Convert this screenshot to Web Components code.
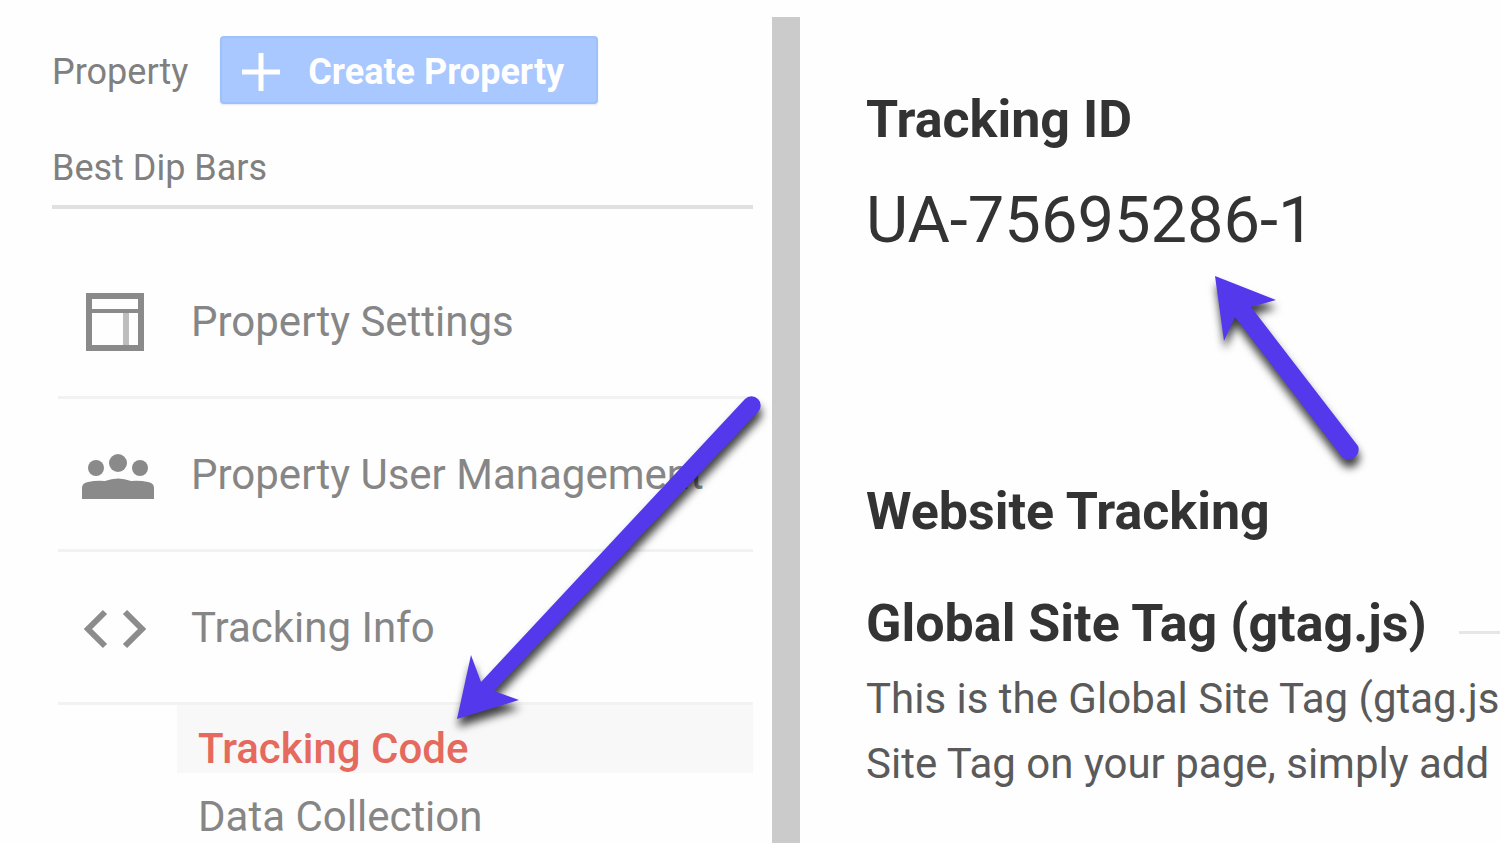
<!DOCTYPE html>
<html lang="en">
<head>
<meta charset="utf-8">
<title>Tracking Code</title>
<style>
    body {
        margin: 0;
        background: #fefefe;
        font-family: Roboto, "Liberation Sans", sans-serif;
    }
</style>
</head>
<body>
<admin-page>
    <property-column slot="nav">
        <create-button slot="action">Create Property</create-button>
        <span slot="name">Best Dip Bars</span>
        <nav-item icon="layout">Property Settings</nav-item>
        <nav-item icon="people">Property User Management</nav-item>
        <nav-item icon="code">Tracking Info</nav-item>
        <sub-item active>Tracking Code</sub-item>
        <sub-item>Data Collection</sub-item>
    </property-column>
    <tracking-details slot="main">
        <span slot="id">UA-75695286-1</span>
    </tracking-details>
</admin-page>

<template id="admin-page">
    <style>
        :host {
            display: grid;
            grid-template-columns: minmax(0, 772fr) 28px minmax(0, 700fr);
            height: 100vh;
            overflow: hidden;
        }
        .divider {
            margin-top: 17px;
            background: #cbcbcb;
        }
    </style>
    <slot name="nav"></slot>
    <div class="divider"></div>
    <slot name="main"></slot>
</template>

<template id="property-column">
    <style>
        :host {
            display: block;
            position: relative;
            padding: 36px 19px 0 52px;
            color: #808080;
        }
        header {
            display: flex;
            align-items: center;
            gap: 32px;
            font-size: 36px;
            line-height: 44px;
        }
        header span {
            padding-top: 4px;
        }
        .picker {
            display: block;
            width: 100%;
            margin: 42px 0 0;
            padding: 0 0 15px;
            border: 0;
            border-bottom: 4px solid #e0e0e0;
            background: none;
            color: inherit;
            font: 36px/44px Roboto, "Liberation Sans", sans-serif;
            text-align: left;
        }
        nav {
            margin: 37px 0 0 6px;
        }
        callout-arrow {
            position: absolute;
            top: 380px;
            right: 0;
        }
    </style>
    <header>
        <span>Property</span>
        <slot name="action"></slot>
    </header>
    <button class="picker" type="button"><slot name="name"></slot></button>
    <nav><slot></slot></nav>
    <callout-arrow kind="long"></callout-arrow>
</template>

<template id="create-button">
    <style>
        :host {
            display: block;
        }
        button {
            display: flex;
            align-items: center;
            gap: 28px;
            height: 68px;
            padding: 4px 32px 0 20px;
            border: 2px solid #9dc1fa;
            border-radius: 4px;
            background: #a8c8ff;
            box-shadow: 0 1px 2px #dfe6f5;
            color: #fff;
            font: bold 36px/44px Roboto, "Liberation Sans", sans-serif;
            white-space: nowrap;
        }
    </style>
    <button type="button">
        <svg width="38" height="40" viewBox="0 0 38 40" aria-hidden="true">
            <path d="M19 1v38M0 20h38" stroke="#fff" stroke-width="5"/>
        </svg>
        <slot></slot>
    </button>
</template>

<template id="nav-item">
    <style>
        :host {
            display: block;
            border-bottom: 3px solid #f2f2f2;
        }
        a {
            display: flex;
            align-items: center;
            gap: 31px;
            height: 150px;
            padding-left: 22px;
            color: #868686;
            font-size: 42px;
            text-decoration: none;
            white-space: nowrap;
        }
        svg {
            flex: none;
        }
    </style>
    <a href="#"><svg width="80" height="64" viewBox="0 0 80 64" aria-hidden="true"></svg><slot></slot></a>
</template>

<template id="sub-item">
    <style>
        :host {
            display: block;
            margin-left: 119px;
        }
        :host([active]) {
            background: #f8f8f8;
        }
        a {
            display: block;
            padding: 20px 0 0 21px;
            color: #868686;
            font-size: 42px;
            line-height: 48px;
            text-decoration: none;
        }
        :host([active]) a {
            color: #e5695c;
            font-weight: 500;
        }
    </style>
    <a href="#"><slot></slot></a>
</template>

<template id="tracking-details">
    <style>
        :host {
            display: block;
            position: relative;
            padding: 88px 0 0 66px;
            color: #333;
            white-space: nowrap;
        }
        h2, h3, p {
            margin: 0;
        }
        h2, h3 {
            font-size: 52px;
            line-height: 64px;
            font-weight: bold;
        }
        .id {
            margin-top: 28px;
            font-size: 65px;
            line-height: 80px;
        }
        .website {
            margin-top: 220px;
        }
        .tag {
            display: flex;
            align-items: center;
            gap: 32px;
            margin-top: 48px;
        }
        .tag::after {
            content: "";
            flex: 1;
            height: 3px;
            margin-top: 16px;
            background: #e6e6e6;
        }
        .text {
            margin-top: 10px;
            color: #5a5a5a;
            font-size: 42px;
            line-height: 65px;
        }
        callout-arrow {
            position: absolute;
            top: 260px;
            left: 400px;
        }
    </style>
    <h2>Tracking ID</h2>
    <p class="id"><slot name="id"></slot></p>
    <h2 class="website">Website Tracking</h2>
    <h3 class="tag">Global Site Tag (gtag.js)</h3>
    <p class="text">This is the Global Site Tag (gtag.js<br>Site Tag on your page, simply add</p>
    <callout-arrow kind="short"></callout-arrow>
</template>

<template id="callout-arrow">
    <style>
        :host {
            display: block;
            pointer-events: none;
        }
        svg {
            display: block;
            fill: #5338ec;
            filter: drop-shadow(1px 8px 4px rgba(0, 0, 0, .75));
        }
    </style>
</template>

<script>
const ICONS = {
    layout: `
        <g fill="none" stroke="#8a8a8a">
            <path d="M9 7h52v52H9z" stroke-width="6"/>
            <path d="M12 22h46" stroke-width="4"/>
            <path d="M46 24v32" stroke="#bdbdbd" stroke-width="6"/>
        </g>`,
    people: `
        <g fill="#8a8a8a">
            <circle cx="16" cy="26" r="8"/>
            <circle cx="38" cy="21" r="9"/>
            <circle cx="60" cy="26" r="8"/>
            <path d="M2 57V46q0-5 6-6 9-2 17-1 13-5 26 0 8-1 17 1 6 1 6 6v11z"/>
        </g>`,
    code: `
        <path d="M25 17L8 34l17 17M45 17l17 17-17 17" fill="none" stroke="#8c8c8c" stroke-width="6"/>`
};

const ARROWS = {
    long: {
        width: 340,
        height: 370,
        path: 'M25 339L39 275l10 27L313 19a9 9 0 0 1 13 13L62 311l25 9z'
    },
    short: {
        width: 180,
        height: 230,
        path: 'M15 16l61 24-25 7L158 186a10 10 0 0 1-16 11L35 57 24 81z'
    }
};

class BaseElement extends HTMLElement {
    constructor() {
        super();
        this.attachShadow({mode: 'open'});
        const template = document.getElementById(this.localName);
        this.shadowRoot.appendChild(template.content.cloneNode(true));
    }
}

class AdminPage extends BaseElement {}
class PropertyColumn extends BaseElement {}
class CreateButton extends BaseElement {}
class SubItem extends BaseElement {}
class TrackingDetails extends BaseElement {}

class NavItem extends BaseElement {
    connectedCallback() {
        this.shadowRoot.querySelector('svg').innerHTML = ICONS[this.getAttribute('icon')];
    }
}

class CalloutArrow extends BaseElement {
    connectedCallback() {
        const { width, height, path } = ARROWS[this.getAttribute('kind')];
        this.shadowRoot.innerHTML +=
            `<svg width="${width}" height="${height}" aria-hidden="true"><path d="${path}"/></svg>`;
    }
}

customElements.define('callout-arrow', CalloutArrow);
customElements.define('create-button', CreateButton);
customElements.define('nav-item', NavItem);
customElements.define('sub-item', SubItem);
customElements.define('property-column', PropertyColumn);
customElements.define('tracking-details', TrackingDetails);
customElements.define('admin-page', AdminPage);
</script>
</body>
</html>
